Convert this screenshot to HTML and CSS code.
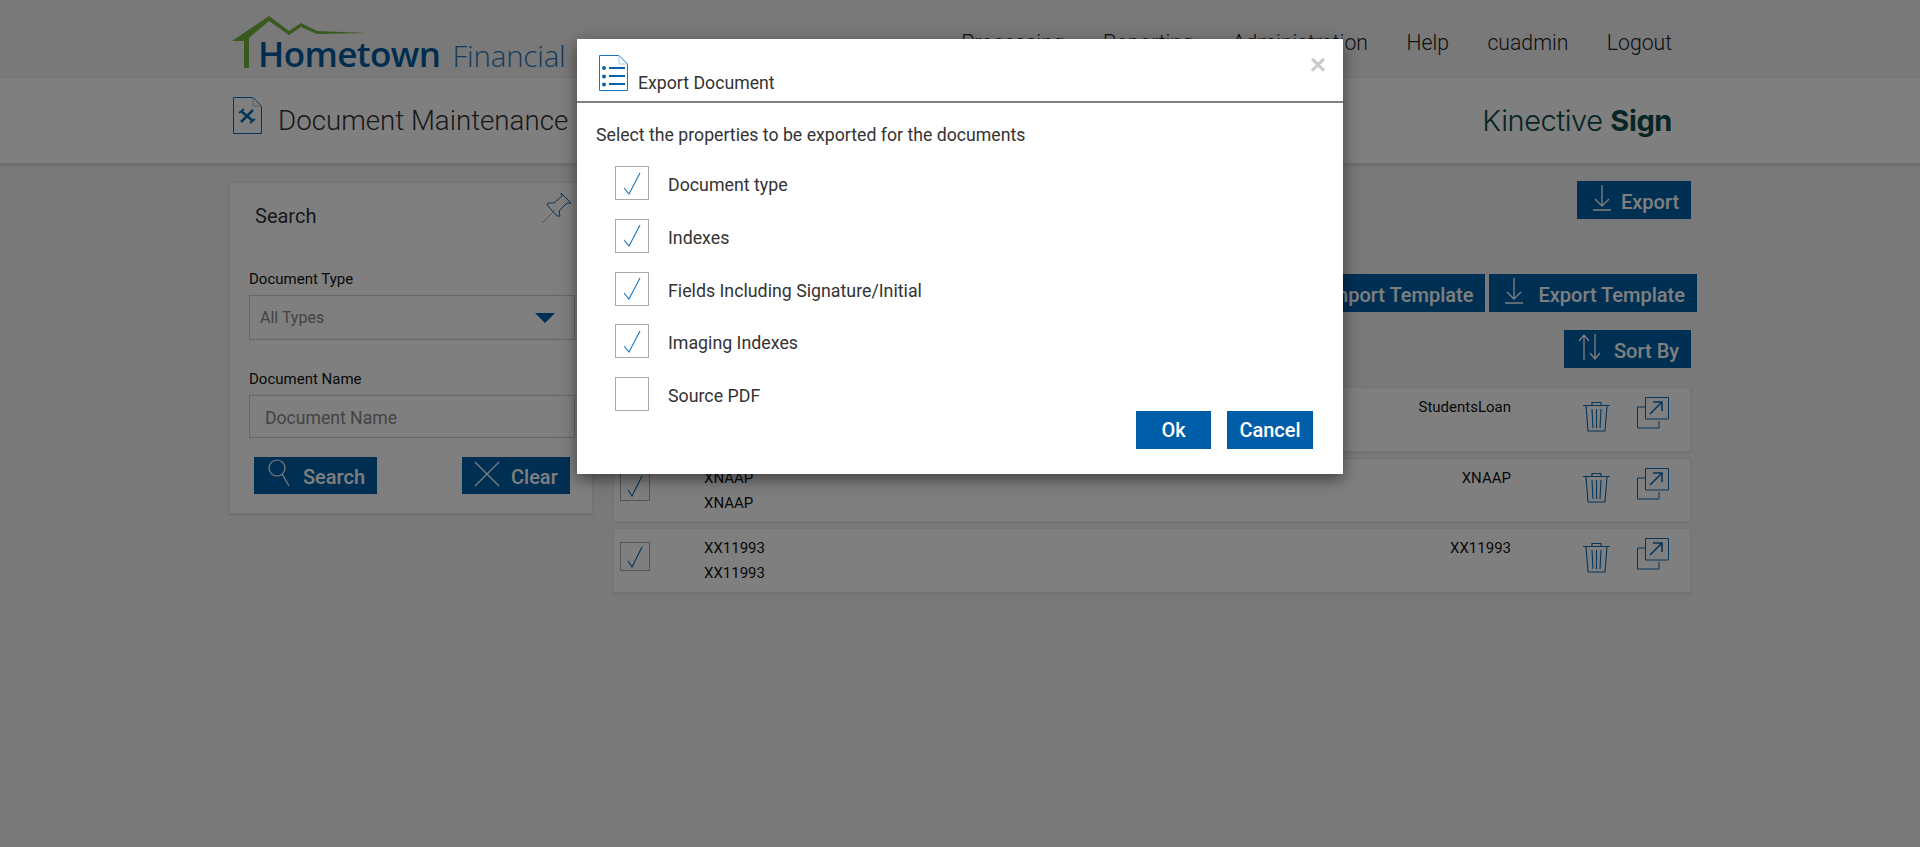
FILE: index.html
```html
<!DOCTYPE html>
<html lang="en">
<head>
<meta charset="utf-8">
<title>Document Maintenance</title>
<link rel="stylesheet" href="styles.css">
</head>
<body>
<header class="topbar">
  <a class="logo">
    <svg class="logo-roof" width="140" height="54" viewBox="0 0 140 54">
      <path d="M0 26 L37 1 L57 16 L69 8 L85 16 L135 18 L85 19 L69 12 L57 20 L37 6 L17 23 L17 53 L12 53 L12 26 Z" fill="#72b33e"/>
    </svg>
    <span class="logo-main">Hometown</span>
    <span class="logo-sub">Financial</span>
  </a>
  <nav class="nav">
    <a>Processing</a><a>Reporting</a><a>Administration</a><a>Help</a><a>cuadmin</a><a>Logout</a>
  </nav>
</header>
<section class="subbar">
  <svg class="page-icon" width="29" height="37" viewBox="0 0 29 37">
    <path d="M.5.5H20L28.5 9V36.500H.5Z" fill="none" stroke="#0a6cb8"/>
    <path d="M20 .5V9H28.500" fill="none" stroke="#9cc4e4"/>
    <path d="M8 14L20 24M20 13L8 25" fill="none" stroke="#0a6cb8" stroke-width="2.600"/>
    <path d="M6 16L11 12M17 26L22 22" fill="none" stroke="#0a6cb8" stroke-width="1.800"/>
  </svg>
  <h1 class="page-title">Document Maintenance</h1>
  <div class="brand">Kinective <b>Sign</b></div>
</section>
<main class="content">
  <aside class="panel">
    <svg class="pin" width="30" height="32" viewBox="0 0 30 32">
      <path d="M0 31L13 18" stroke="#8fb6d8" fill="none"/>
      <path d="M19 1L29 11L25 11L17 19L18 24L15 24L5 13L6 11L12 11L20 4Z" stroke="#0a6cb8" fill="none"/>
    </svg>
    <h2 class="panel-title">Search</h2>
    <label class="field-label first">Document Type</label>
    <div class="select"><span>All Types</span><i class="caret"></i></div>
    <label class="field-label second">Document Name</label>
    <div class="input">Document Name</div>
    <div class="panel-actions">
      <button class="btn btn-search">
        <svg width="22" height="28" viewBox="0 0 22 28"><circle cx="9" cy="9" r="8" fill="none" stroke="#fff" stroke-width="1.200"/><path d="M14 15L21 27" stroke="#fff" stroke-width="1.200"/></svg>
        Search
      </button>
      <button class="btn btn-clear">
        <svg width="26" height="26" viewBox="0 0 26 26"><path d="M1 1L25 25M25 1L1 25" stroke="#fff" stroke-width="1.200"/></svg>
        Clear
      </button>
    </div>
  </aside>
  <section class="results">
    <div class="toolbar tb-export">
      <button class="btn btn-export">
        <svg width="18" height="26" viewBox="0 0 18 26"><path d="M9 0V20M2 14L9 21L16 14M0 25H18" fill="none" stroke="#fff" stroke-width="1.300"/></svg>
        Export
      </button>
    </div>
    <div class="toolbar tb-template">
      <button class="btn btn-template">
        <svg width="18" height="26" viewBox="0 0 18 26"><path d="M9 21V1M2 7L9 0L16 7M0 25H18" fill="none" stroke="#fff" stroke-width="1.300"/></svg>
        Import Template
      </button>
      <button class="btn btn-template">
        <svg width="18" height="26" viewBox="0 0 18 26"><path d="M9 0V20M2 14L9 21L16 14M0 25H18" fill="none" stroke="#fff" stroke-width="1.300"/></svg>
        Export Template
      </button>
    </div>
    <div class="toolbar tb-sort">
      <button class="btn btn-sort">
        <svg width="23" height="26" viewBox="0 0 23 26"><path d="M6 26V1M1 7L6 1L11 7M17 0V25M12 19L17 25L22 19" fill="none" stroke="#fff" stroke-width="1.300"/></svg>
        Sort By
      </button>
    </div>
    <ul class="rows">
      <li class="row">
        <span class="row-check"><svg width="16" height="22" viewBox="0 0 16 22"><path d="M1 15L5 21L15 1" fill="none" stroke="#0a6cb8" stroke-width="1.100"/></svg></span>
        <div class="row-name">StudentsLoan<br>StudentsLoan</div>
        <div class="row-code">StudentsLoan</div>
        <svg class="trash" width="27" height="31" viewBox="0 0 27 31"><path d="M0 4.500H27M9 4V1.500H18V4M3 5L5 30H22L24 5M9 8L10 27M13.500 8V27M18 8L17 27" fill="none" stroke="#0a6cb8" stroke-width="1.100"/></svg>
        <svg class="share" width="32" height="32" viewBox="0 0 32 32"><path d="M22 24V31H.5V10H8" fill="none" stroke="#0a6cb8" stroke-width="1"/><path d="M8.500.5H31.500V22H8.500Z" fill="none" stroke="#0a6cb8" stroke-width="1"/><path d="M13 17L25 5M16 5H25V14" fill="none" stroke="#0a6cb8" stroke-width="1.600"/></svg>
      </li>
      <li class="row">
        <span class="row-check"><svg width="16" height="22" viewBox="0 0 16 22"><path d="M1 15L5 21L15 1" fill="none" stroke="#0a6cb8" stroke-width="1.100"/></svg></span>
        <div class="row-name">XNAAP<br>XNAAP</div>
        <div class="row-code">XNAAP</div>
        <svg class="trash" width="27" height="31" viewBox="0 0 27 31"><path d="M0 4.500H27M9 4V1.500H18V4M3 5L5 30H22L24 5M9 8L10 27M13.500 8V27M18 8L17 27" fill="none" stroke="#0a6cb8" stroke-width="1.100"/></svg>
        <svg class="share" width="32" height="32" viewBox="0 0 32 32"><path d="M22 24V31H.5V10H8" fill="none" stroke="#0a6cb8" stroke-width="1"/><path d="M8.500.5H31.500V22H8.500Z" fill="none" stroke="#0a6cb8" stroke-width="1"/><path d="M13 17L25 5M16 5H25V14" fill="none" stroke="#0a6cb8" stroke-width="1.600"/></svg>
      </li>
      <li class="row">
        <span class="row-check"><svg width="16" height="22" viewBox="0 0 16 22"><path d="M1 15L5 21L15 1" fill="none" stroke="#0a6cb8" stroke-width="1.100"/></svg></span>
        <div class="row-name">XX11993<br>XX11993</div>
        <div class="row-code">XX11993</div>
        <svg class="trash" width="27" height="31" viewBox="0 0 27 31"><path d="M0 4.500H27M9 4V1.500H18V4M3 5L5 30H22L24 5M9 8L10 27M13.500 8V27M18 8L17 27" fill="none" stroke="#0a6cb8" stroke-width="1.100"/></svg>
        <svg class="share" width="32" height="32" viewBox="0 0 32 32"><path d="M22 24V31H.5V10H8" fill="none" stroke="#0a6cb8" stroke-width="1"/><path d="M8.500.5H31.500V22H8.500Z" fill="none" stroke="#0a6cb8" stroke-width="1"/><path d="M13 17L25 5M16 5H25V14" fill="none" stroke="#0a6cb8" stroke-width="1.600"/></svg>
      </li>
    </ul>
  </section>
</main>
<div class="backdrop"></div>
<div class="modal" role="dialog">
  <div class="modal-head">
    <svg width="29" height="36" viewBox="0 0 29 36">
      <path d="M.5.5H20L28.500 9V35.500H.5Z" fill="none" stroke="#1b75bc"/>
      <path d="M20 .5V9H28.500" fill="none" stroke="#a9cbe6"/>
      <g fill="#0a64ad"><circle cx="5" cy="13" r="2"/><circle cx="5" cy="21.500" r="2"/><circle cx="5" cy="29.500" r="2"/><rect x="10" y="12" width="16" height="2"/><rect x="10" y="20" width="16" height="2"/><rect x="10" y="28" width="16" height="2"/></g>
    </svg>
    <span class="modal-title">Export Document</span>
    <span class="modal-close">×</span>
  </div>
  <div class="modal-body">
    <p class="modal-lead">Select the properties to be exported for the documents</p>
    <div class="option"><span class="check"><svg width="18" height="23" viewBox="0 0 18 23"><path d="M1 16L6 22L17 1" fill="none" stroke="#1b75bc" stroke-width="1.100"/></svg></span>Document type</div>
    <div class="option"><span class="check"><svg width="18" height="23" viewBox="0 0 18 23"><path d="M1 16L6 22L17 1" fill="none" stroke="#1b75bc" stroke-width="1.100"/></svg></span>Indexes</div>
    <div class="option"><span class="check"><svg width="18" height="23" viewBox="0 0 18 23"><path d="M1 16L6 22L17 1" fill="none" stroke="#1b75bc" stroke-width="1.100"/></svg></span>Fields Including Signature/Initial</div>
    <div class="option"><span class="check"><svg width="18" height="23" viewBox="0 0 18 23"><path d="M1 16L6 22L17 1" fill="none" stroke="#1b75bc" stroke-width="1.100"/></svg></span>Imaging Indexes</div>
    <div class="option"><span class="check"></span>Source PDF</div>
    <div class="modal-foot">
      <button class="btn btn-ok">Ok</button>
      <button class="btn btn-cancel">Cancel</button>
    </div>
  </div>
</div>
</body>
</html>
```
FILE: styles.css
```css
* { box-sizing: border-box; }
html, body { margin: 0; height: 847px; overflow: hidden; }
body { background: #f2f2f2; font-family: Roboto, "Liberation Sans", sans-serif; color: #333; position: relative; }
h1, h2, p, ul { margin: 0; padding: 0; font-weight: 400; }
ul { list-style: none; }

.topbar { height: 78px; background: #f2f2f2; display: flex; align-items: center; padding: 0 248px 0 232px; }
.logo { position: relative; display: flex; align-items: baseline; padding: 36px 0 0 26px; width: 340px; height: 78px; }
.logo-roof { position: absolute; left: 0; top: 15px; }
.logo-main { font: 600 35px/36px "Open Sans", sans-serif; color: #005b9f; letter-spacing: -.6px; }
.logo-sub { font: 300 29.500px/36px "Open Sans", sans-serif; color: #2f79b5; margin-left: 12px; letter-spacing: -.2px; }
.nav { margin-left: auto; display: flex; gap: 38.500px; font-weight: 300; font-size: 21.200px; color: #222; padding-top: 7px; }

.subbar { height: 85px; background: #fefefe; display: flex; align-items: center; padding: 0 248px 0 233px; box-shadow: 0 2px 4px rgba(0,0,0,.14); position: relative; }
.page-icon { margin-top: -11px; }
.page-title { font-size: 27.700px; font-weight: 300; margin-left: 16px; color: #333; }
.brand { margin-left: auto; font: 300 29px/1 Inter, sans-serif; color: #0c4a4a; letter-spacing: -.4px; }
.brand b { font-weight: 700; }

.content { display: flex; padding-left: 229px; gap: 20px; height: 684px; }
.panel { position: relative; width: 364px; height: 332px; margin-top: 19px; padding: 21px 17px 0 19px; background: #fefefe; border: 1px solid #e8e8e8; box-shadow: 0 1px 2px rgba(0,0,0,.12); }
.pin { position: absolute; right: 20px; top: 9px; }
.panel-title { font-size: 20px; line-height: 24px; margin-left: 6px; color: #333; }
.field-label { display: block; font-size: 15px; line-height: 18px; color: #111; }
.field-label.first { margin-top: 42px; }
.field-label.second { margin-top: 30px; }
.select, .input { width: 326px; border: 1px solid #ccc; background: #fefefe; color: #888; display: flex; align-items: center; }
.select { height: 45px; margin-top: 7px; padding: 0 19px 0 10px; font-size: 16px; justify-content: space-between; }
.caret { border: 10px solid transparent; border-top-color: #005ea8; border-bottom: 0; }
.input { height: 43px; margin-top: 7px; padding: 2px 0 0 15px; font-size: 17.600px; }
.panel-actions { display: flex; justify-content: space-between; padding: 0 5px; margin-top: 19px; }

.btn { border: 0; background: #005ea8; color: #fff; font: 500 20px Roboto, sans-serif; display: flex; align-items: center; padding: 3px 0 0; height: 38px; }
.btn svg { flex: none; margin-top: -7px; }
.btn-search { height: 37px; width: 123px; padding-left: 14px; gap: 13px; }
.btn-clear { height: 37px; width: 108px; padding-left: 12px; gap: 11px; }
.btn-search svg { margin-top: -8px; }
.btn-clear svg { margin-top: -6px; }
.btn-export { width: 114px; padding-left: 16px; gap: 10px; }
.btn-template { padding: 3px 12px 0 16px; gap: 15px; }
.btn-sort { width: 127px; padding-left: 14px; gap: 13px; }

.results { width: 1078px; }
.toolbar { display: flex; justify-content: flex-end; }
.tb-export { margin-top: 18px; }
.tb-template { margin-top: 55px; gap: 4px; margin-right: -6px; }
.tb-sort { margin-top: 18px; }
.rows { margin-top: 19px; display: flex; flex-direction: column; gap: 6px; }
.row { height: 64.5px; border: 1px solid #e8e8e8; background: #fefefe; box-shadow: 0 1px 1px rgba(0,0,0,.06); display: grid; grid-template-columns: 84px 400px 1fr 54px 53px; padding-left: 6px; font-size: 15px; line-height: 25px; color: #111; }
.row > :nth-child(n) { align-self: start; }
.row-check { width: 30px; height: 29px; margin-top: 13px; border: 1px solid #aaa; display: flex; align-items: center; justify-content: center; }
.row-name { padding-top: 7px; }
.row-code { padding: 7px 72px 0 0; text-align: right; }
.trash { margin-top: 13px; }
.share { margin-top: 9px; }

.backdrop { position: absolute; inset: 0; background: rgba(0,0,0,.5); }
.modal { position: absolute; left: 577px; top: 39px; width: 766px; height: 435px; background: #fff; box-shadow: 0 5px 15px rgba(0,0,0,.5); }
.modal-head { position: relative; height: 64px; padding: 16px 0 0 22px; border-bottom: 2px solid #808080; display: flex; align-items: flex-start; gap: 10px; }
.modal-title { font-size: 17.700px; line-height: 21px; margin-top: 18px; color: #333; }
.modal-close { position: absolute; right: 17px; top: 12px; font: 700 28px/1 "Liberation Sans", sans-serif; color: #ccc; }
.modal-body { padding: 22px 30px 0 19px; }
.modal-lead { font-size: 17.700px; line-height: 21px; color: #333; margin-bottom: 20px; }
.option { display: flex; align-items: flex-start; gap: 19px; height: 34px; margin: 0 0 18.750px 19px; font-size: 17.800px; line-height: 38px; color: #333; }
.option:nth-last-child(2) { margin-bottom: 0; }
.check { width: 34px; height: 34px; border: 1px solid #aaa; display: flex; align-items: center; justify-content: center; }
.modal-foot { display: flex; justify-content: flex-end; gap: 16px; }
.btn-ok, .btn-cancel { justify-content: center; padding: 0; }
.btn-ok { width: 75px; }
.btn-cancel { width: 86px; }
```
